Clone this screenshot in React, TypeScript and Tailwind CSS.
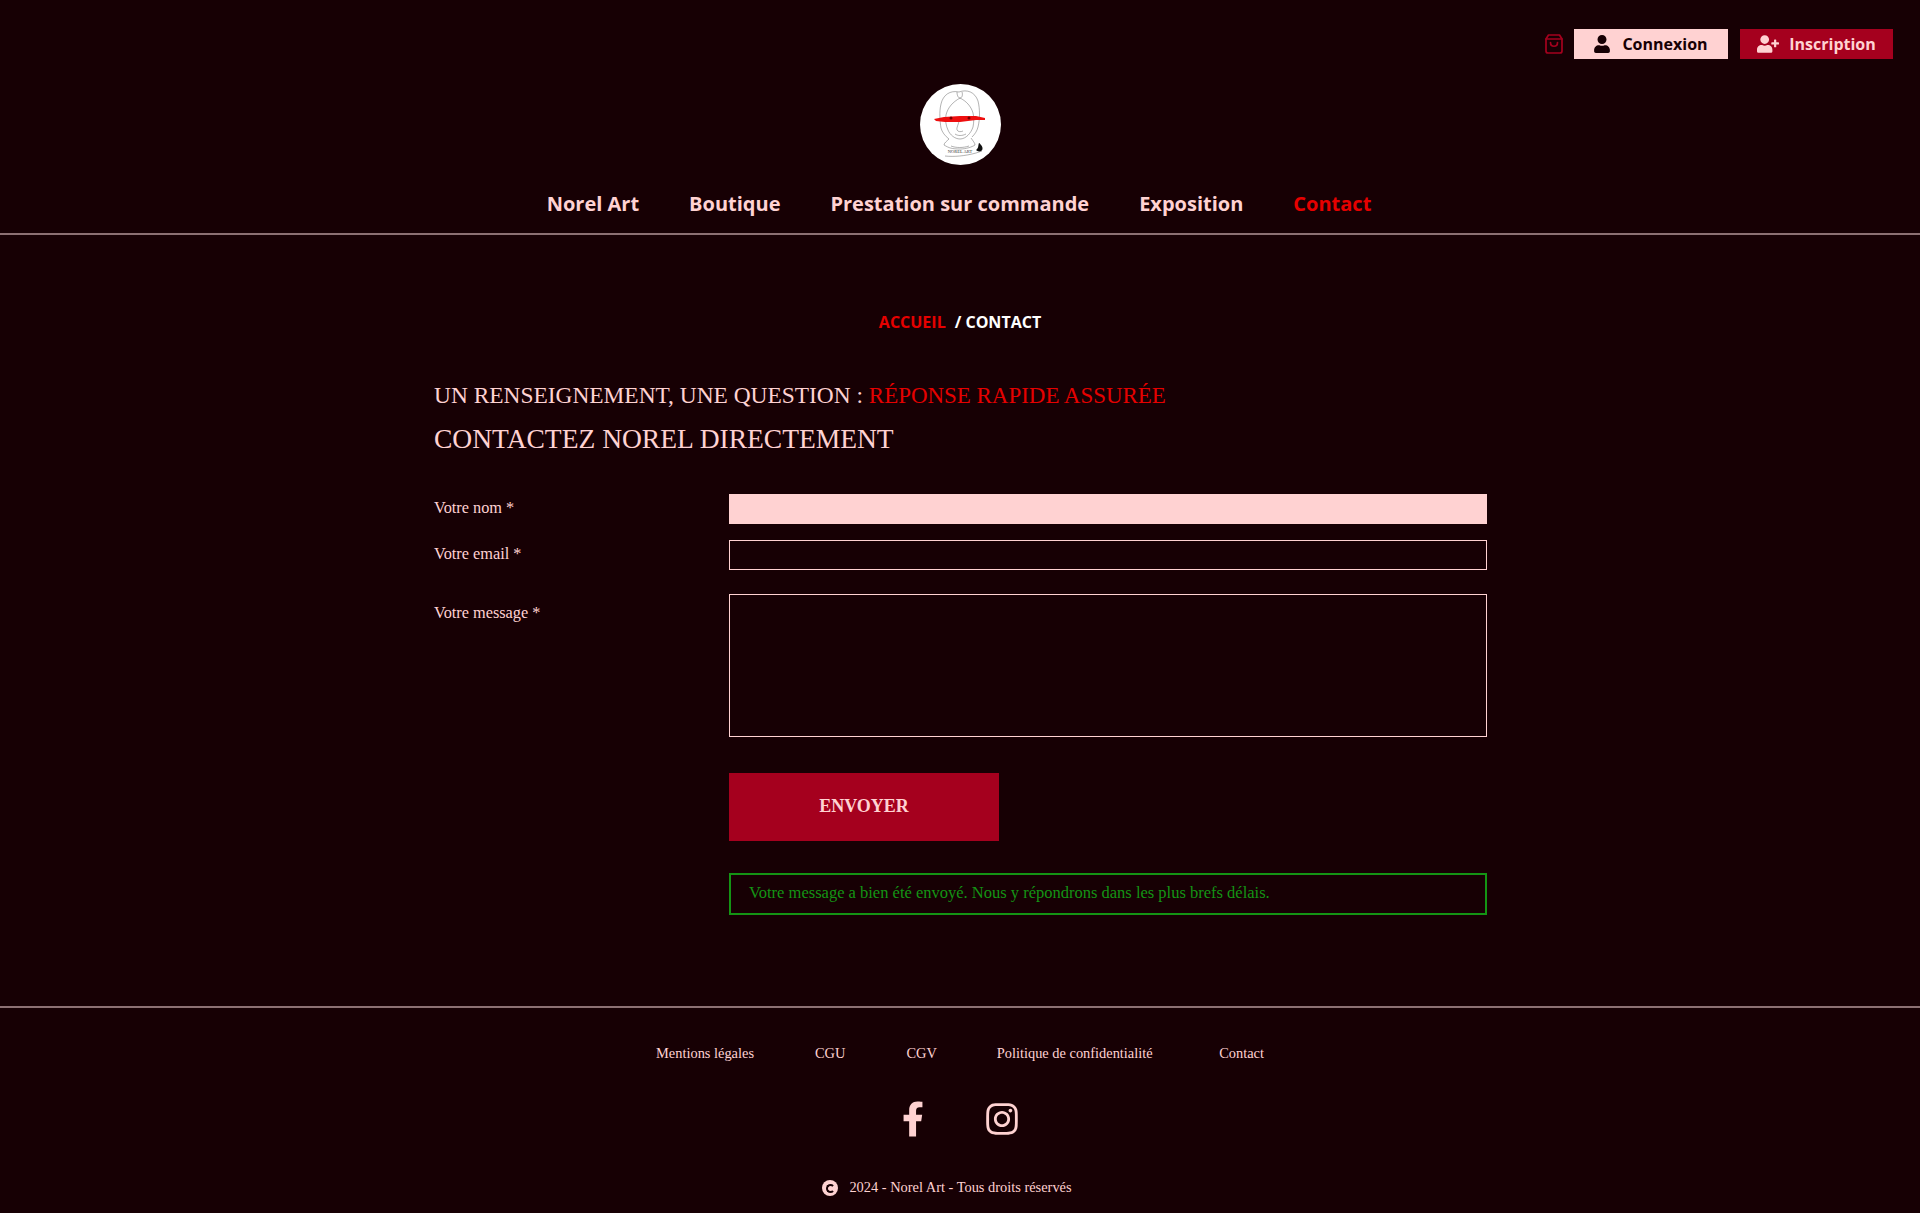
import React from "react";
import { FaFacebookF, FaInstagram, FaUser, FaUserPlus } from "react-icons/fa";

const sans = "font-['Open_Sans',sans-serif]";
const serif = "font-['Liberation_Serif',serif]";

function Logo() {
  return (
    <svg viewBox="0 0 81 81" className="w-[81px] h-[81px]">
      <circle cx="40.5" cy="40.5" r="40.5" fill="#fff" />
      <g fill="none" stroke="#555" strokeWidth="0.45">
        <path d="M39 8C30 6 23 11 21 20c-2 8-1 18 0 24 1 4 4 8 8 11" />
        <path d="M39 8c8-3 16 0 19 9 2 8 2 18 0 26-1 4-3 7-6 10" />
        <path d="M37 8c0 3 1 6 3 6s3-3 2-6" />
        <path d="M40 14c-7 4-12 9-14 17-1 5 0 11 2 15 2 5 7 9 12 9 6 0 11-6 13-12 1-5 1-10 0-14-2-7-7-12-13-15z" />
        <path d="M39 36c0 4-3 8-2 10 1 2 4 2 6 1M35 50c3 2 7 2 11 0" />
        <path d="M29 55c-2 2-5 4-5 6 5 3 8 4 16 4 6 0 12-2 15-4 0-2-2-4-4-7" />
        <path d="M31 62c5 2 12 2 18 0" />
        <path d="M25 72c9 1 20 0 31-3l6-2" />
      </g>
      <path d="M14 35l10-2 16-1 16 0 9 2 0 2-9 0-16 2-15 0-9-1-2-2z" fill="#ee0f0f" />
      <circle cx="31" cy="34" r="1.5" fill="#700" />
      <circle cx="49" cy="34" r="1.5" fill="#700" />
      <text x="40" y="69" textAnchor="middle" fontSize="4.5" fontFamily="Liberation Serif, serif" fill="#333">NOREL ART</text>
      <path d="M56 66c3-2 2-5 3-7 1 0 1 1 2 2 2 2 2 5 0 6-2 1-4 0-5-1z" fill="#111" />
    </svg>
  );
}

function Bag() {
  return (
    <svg viewBox="0 0 18 20" className="w-[18px] h-[20px]" fill="none" stroke="#a5001e" strokeWidth="1.7" strokeLinejoin="round" strokeLinecap="round">
      <path d="M3.5 1h11L17 5v12a2 2 0 0 1-2 2H3a2 2 0 0 1-2-2V5z" />
      <path d="M1 5h16" />
      <path d="M5.5 8.5c0 5 7 5 7 0" />
    </svg>
  );
}

export default function App() {
  return (
    <div className={`min-h-[1213px] bg-[#170004] text-[#ffd2d2] ${serif} flex flex-col`}>
      <header className="h-[235px] border-b-2 border-[#8c7073] flex flex-col">
        <div className="flex justify-end items-center pt-[29px] pr-[27px]">
          <Bag />
          <a className={`${sans} ml-[11px] w-[154px] h-[30px] bg-[#ffd2d2] text-[#170004] font-bold text-[16px] flex items-center justify-center gap-[11px] pr-[1px]`}>
            <FaUser className="w-[18px] h-[18px]" /> Connexion
          </a>
          <a className={`${sans} ml-[12px] w-[153px] h-[30px] bg-[#a5001e] text-[#ffd2d2] font-bold text-[16px] flex items-center justify-center gap-[10px]`}>
            <FaUserPlus className="w-[22px] h-[18px]" /> Inscription
          </a>
        </div>
        <div className="flex justify-center mt-[25px]">
          <Logo />
        </div>
        <nav className={`${sans} flex justify-center gap-[50px] mt-[24px] mr-[2px] text-[20px] leading-[30px] font-bold`}>
          <a>Norel Art</a>
          <a>Boutique</a>
          <a>Prestation sur commande</a>
          <a>Exposition</a>
          <a className="text-[#e60000]">Contact</a>
        </nav>
      </header>

      <main className="flex-1 flex flex-col items-center">
        <div className={`${sans} mt-[75px] text-[16px] leading-[24px] font-bold text-white`}>
          <span className="text-[#e60000]">ACCUEIL</span>
          <span className="ml-[9px]">/ CONTACT</span>
        </div>

        <div className="w-[1054px] mt-[39px]">
          <h1 className="h-[44px] text-[23.4px] leading-[44px] font-normal pl-[1px]">
            UN RENSEIGNEMENT, UNE QUESTION : <span className="text-[#e60000] text-[22.95px]">RÉPONSE RAPIDE ASSURÉE</span>
          </h1>
          <h2 className="text-[27.5px] leading-[44px] font-normal pl-[1px]">CONTACTEZ NOREL DIRECTEMENT</h2>

          <form className="mt-[33px] flex flex-col">
            <div className="flex h-[30px]">
              <label className="w-[296px] text-[16.3px] leading-[28px] pl-[1px]">Votre nom *</label>
              <input className="w-[758px] h-[30px] bg-[#ffd2d2]" />
            </div>
            <div className="flex h-[30px] mt-[16px]">
              <label className="w-[296px] text-[16.3px] leading-[28px] pl-[1px]">Votre email *</label>
              <input className="w-[758px] h-[30px] border border-[#ffd2d2]" />
            </div>
            <div className="flex mt-[24px]">
              <label className="w-[296px] text-[16.3px] leading-[28px] pt-[5px] pl-[1px]">Votre message *</label>
              <textarea className="w-[758px] h-[143px] border border-[#ffd2d2] resize-none block" />
            </div>
            <div className="pl-[296px] mt-[36px]">
              <button type="button" className="w-[270px] h-[68px] bg-[#a5001e] font-bold text-[18px] block pb-[2px]">ENVOYER</button>
              <div className="mt-[32px] w-[758px] h-[42px] border-2 border-[#149414] text-[#149414] text-[16.5px] leading-[36px] pl-[18px]">
                Votre message a bien été envoyé. Nous y répondrons dans les plus brefs délais.
              </div>
            </div>
          </form>
        </div>
      </main>

      <footer className="h-[207px] border-t-2 border-[#8c7073] flex flex-col items-center text-[14.4px]">
        <div className="h-[20px] mt-[35px] flex gap-[60px]">
          <a>Mentions légales</a>
          <a className="ml-[1px]">CGU</a>
          <a className="ml-[1px]">CGV</a>
          <a>Politique de confidentialité</a>
          <a className="ml-[6.5px]">Contact</a>
        </div>
        <div className="flex items-center gap-[60px] mt-[37px] ml-[1px] h-[38px]">
          <FaFacebookF className="w-[22px] h-[36px]" />
          <FaInstagram className="w-[36px] h-[36px]" />
        </div>
        <div className="flex items-center mt-[40px] gap-[11px] h-[20px] mr-[26px]">
          <span className="w-[16px] h-[16px] rounded-full bg-[#ffd2d2] flex items-center justify-center">
            <span className="w-[9px] h-[9px] rounded-full border-[2px] border-[#170004] border-r-transparent" />
          </span>
          <span>2024 - Norel Art - Tous droits réservés</span>
        </div>
      </footer>
    </div>
  );
}
